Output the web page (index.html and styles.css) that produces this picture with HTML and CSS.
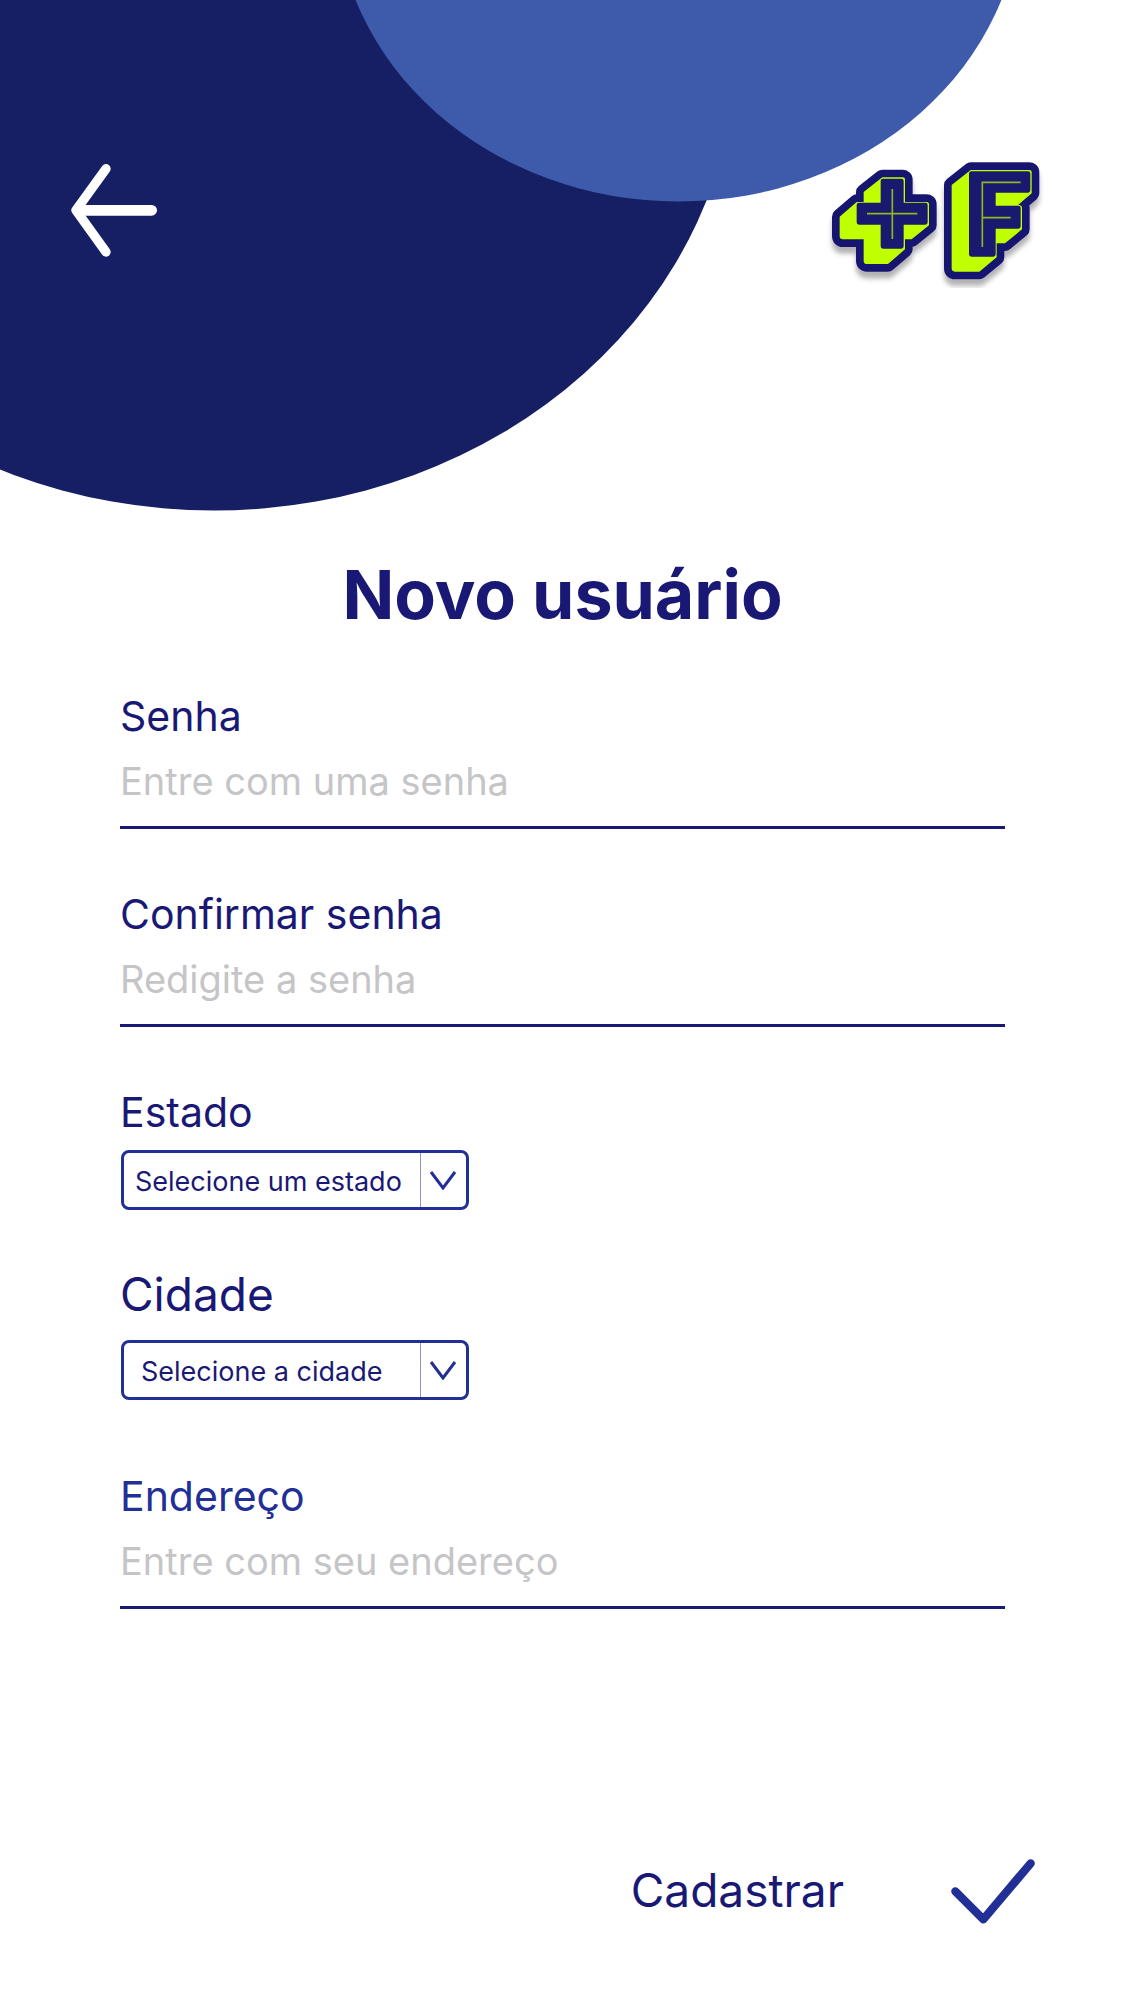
FILE: index.html
```html
<!DOCTYPE html>
<html lang="pt-BR">
<head>
  <meta charset="utf-8">
  <meta name="viewport" content="width=device-width, initial-scale=1">
  <title>Novo usuário</title>
  <link rel="stylesheet" href="styles.css">
</head>
<body>
  <div class="page">
    <header class="hero">
      <svg class="hero-shapes" viewBox="0 0 1125 512" aria-hidden="true">
        <ellipse cx="214" cy="43.5" rx="523" ry="467" fill="#161f63"/>
        <ellipse cx="678.5" cy="-102.5" rx="343" ry="304" fill="#3d5aab"/>
      </svg>
      <a class="back" href="#" aria-label="Voltar">
        <svg class="back-icon" viewBox="60 45 264 330" fill="none" stroke="#fff" stroke-linecap="round" stroke-linejoin="round" aria-hidden="true">
          <path d="M168 86 78 211l90 125" stroke-width="28"/>
          <path d="M82 211h223" stroke-width="32"/>
        </svg>
      </a>
      <svg class="logo" viewBox="45 45 690 399" role="img" aria-label="Mais F">
        <defs>
          <filter id="shadow" x="-20%" y="-20%" width="140%" height="150%">
            <feDropShadow dx="0" dy="20" stdDeviation="8" flood-color="#000" flood-opacity="0.3"/>
          </filter>
          <path id="plus" d="M217 112H277Q285 112 285 119V186H349Q357 186 357 193V256L305 298H285V328L234 372H171Q161 372 161 362V298H99Q89 298 89 288V230L140 186H161V156Z"/>
          <path id="eff" d="M482 90H657Q665 90 665 97V160L625 194Q636 196 636 203V268L585 310H560V352L508 395H435Q425 395 425 385V135Z"/>
        </defs>
        <g fill="#191970" stroke="#191970" stroke-width="46" stroke-linejoin="round" filter="url(#shadow)">
          <use href="#plus"/>
          <use href="#eff"/>
        </g>
        <g fill="#bfff00">
          <use href="#plus"/>
          <use href="#eff"/>
        </g>
        <g fill="#191970" stroke="#191970" stroke-width="14" stroke-linejoin="round">
          <path d="M219 123H274V195H346V247H274V319H219V247H147V195H219Z"/>
          <path d="M484 101H654V151H550V204H625V259H550V343H484Z"/>
        </g>
        <g fill="none" stroke="#8fb81c" stroke-width="5">
          <path d="M247 147V297M171 221H322"/>
          <path d="M517 321V127H632M517 233H602"/>
        </g>
      </svg>
    </header>

    <main class="content">
      <h1 class="title">Novo usuário</h1>
      <form class="form" id="cadastro">
        <div class="field">
          <label class="label" for="senha">Senha</label>
          <input class="input" id="senha" type="password" placeholder="Entre com uma senha">
        </div>
        <div class="field">
          <label class="label" for="confirmar">Confirmar senha</label>
          <input class="input" id="confirmar" type="password" placeholder="Redigite a senha">
        </div>
        <div class="field field-select">
          <label class="label" for="estado">Estado</label>
          <div class="picker">
            <select class="select" id="estado"><option>Selecione um estado</option></select>
            <span class="picker-arrow" aria-hidden="true">
              <svg width="28" height="20" viewBox="0 0 28 20" fill="none" stroke="#222f95" stroke-width="3"><path d="M1 2l12 16L25 2"/></svg>
            </span>
          </div>
        </div>
        <div class="field field-city">
          <label class="label label-large" for="cidade">Cidade</label>
          <div class="picker">
            <select class="select select-inset" id="cidade"><option>Selecione a cidade</option></select>
            <span class="picker-arrow" aria-hidden="true">
              <svg width="28" height="20" viewBox="0 0 28 20" fill="none" stroke="#222f95" stroke-width="3"><path d="M1 2l12 16L25 2"/></svg>
            </span>
          </div>
        </div>
        <div class="field">
          <label class="label label-accent" for="endereco">Endereço</label>
          <input class="input" id="endereco" type="text" placeholder="Entre com seu endereço">
        </div>
      </form>
    </main>

    <footer class="actions">
      <button class="submit" type="submit" form="cadastro">
        <span>Cadastrar</span>
        <svg class="check" viewBox="1050 80 270 210" fill="none" stroke="#222f95" stroke-width="25" stroke-linecap="round" stroke-linejoin="round" aria-hidden="true">
          <path d="M1066 183l84 84 142-168"/>
        </svg>
      </button>
    </footer>
  </div>
</body>
</html>
```
FILE: styles.css
```css
* {
  box-sizing: border-box;
}

body {
  margin: 0;
  background: #fff;
  color: #191975;
  font-family: Inter, "Liberation Sans", sans-serif;
}

.page {
  display: flex;
  flex-direction: column;
  min-height: 100vh;
}

.hero {
  position: relative;
  display: flex;
  justify-content: space-between;
  align-items: flex-start;
  aspect-ratio: 1125 / 512;
  padding: 155px 70px 0;
}

.hero-shapes {
  position: absolute;
  inset: 0;
  width: 100%;
  height: 100%;
}

.back,
.logo {
  position: relative;
}

.back-icon {
  display: block;
  width: 88px;
  height: 110px;
}

.logo {
  width: 230px;
  height: 133px;
}

.content {
  flex: 1;
  padding: 42px 120px 80px;
}

.title {
  margin: 0 0 57px;
  font-size: 68px;
  font-weight: 700;
  line-height: 80px;
  text-align: center;
}

.form {
  display: flex;
  flex-direction: column;
  gap: 60px;
}

.field {
  display: flex;
  flex-direction: column;
}

.field-select {
  gap: 13px;
}

.field-city {
  gap: 14px;
  margin: -8px 0 11px;
}

.label {
  font-size: 41px;
  line-height: 50px;
}

.label-large {
  font-size: 46px;
  line-height: 64px;
}

.label-accent {
  color: #222f95;
}

.input {
  width: 100%;
  height: 88px;
  padding: 0 0 5px;
  border: 0;
  border-bottom: 3px solid #191975;
  border-radius: 0;
  background: none;
  color: inherit;
  font: inherit;
  font-size: 38px;
}

.input::placeholder {
  color: #c5c5c7;
  opacity: 1;
}

.picker {
  display: grid;
  grid-template-columns: 1fr 46px;
  width: 348px;
  height: 60px;
  margin-left: 1px;
  border: 3px solid #222f95;
  border-radius: 8px;
}

.select {
  grid-area: 1 / 1 / 2 / 3;
  width: 100%;
  padding: 2px 0 0 11px;
  border: 0;
  appearance: none;
  background: none;
  color: inherit;
  font: inherit;
  font-size: 27px;
}

.select-inset {
  padding-left: 17px;
}

.picker-arrow {
  grid-area: 1 / 2;
  display: flex;
  align-items: center;
  justify-content: center;
  border-left: 1px solid #8e95c9;
  pointer-events: none;
}

.actions {
  display: flex;
  justify-content: flex-end;
  padding: 0 85px 74px;
}

.submit {
  display: flex;
  align-items: flex-start;
  gap: 106px;
  padding: 0;
  border: 0;
  background: none;
  color: inherit;
  font: inherit;
  font-size: 46px;
  line-height: 66px;
}

.check {
  width: 90px;
  height: 70px;
}
```
